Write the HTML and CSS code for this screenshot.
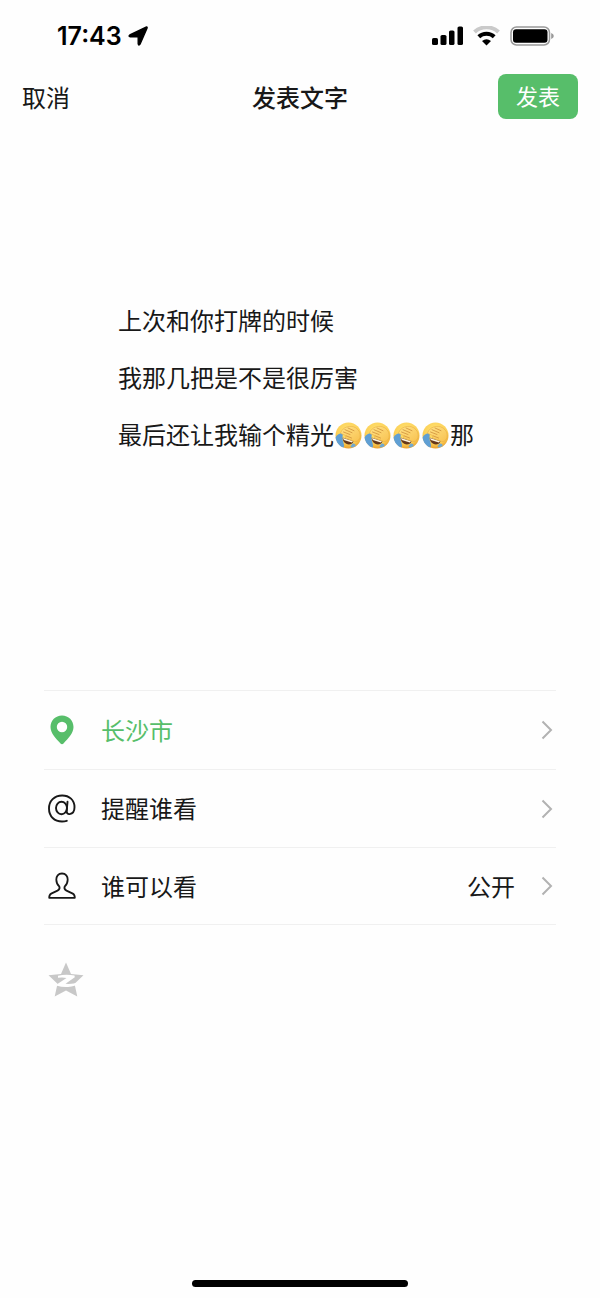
FILE: index.html
```html
<!DOCTYPE html>
<html lang="zh-CN">
<head>
<meta charset="utf-8">
<meta name="viewport" content="width=device-width, initial-scale=1">
<title>发表文字</title>
<link rel="stylesheet" href="styles.css">
</head>
<body>
<svg class="defs" aria-hidden="true">
  <defs>
    <radialGradient id="skin" cx="50%" cy="35%" r="65%">
      <stop offset="0" stop-color="#ffe67a"/>
      <stop offset="0.7" stop-color="#fcd056"/>
      <stop offset="1" stop-color="#e9a02f"/>
    </radialGradient>
    <linearGradient id="hand" x1="0" y1="0" x2="1" y2="1">
      <stop offset="0" stop-color="#ffe388"/>
      <stop offset="1" stop-color="#f8c250"/>
    </linearGradient>
    <symbol id="facepalm" viewBox="0 0 27 27">
      <circle cx="13.5" cy="13.5" r="13" fill="url(#skin)"/>
      <path d="M7.5 15.5 L18.5 19.2 C17.5 22.3 14 23.3 11.2 21.8 C9 20.6 7.5 18.500 7.500 15.500Z" fill="#65371b"/>
      <path d="M8 16 L18 19.3 L16.8 20.4 L8.8 17.9Z" fill="#fff4dc"/>
      <path d="M7.5 11 C4 11.300 1.500 13 0.600 15.500 C1 20 4.500 24.500 8.500 25.500 C10 23.500 8 20 7.500 17 C7.200 14.500 8.300 13 7.500 11Z" fill="#5f9fd4"/>
      <path d="M17.5 21.500 C19.500 21.200 20.800 22.300 20.500 24 C18.500 25.500 16 26 15.500 24.500Z" fill="#6fa8d2"/>
      <path d="M6 10 C8 5.500 13.500 3.500 18.500 4.800 C23.500 6.500 26 11 25 15.500 C24 19.500 20.500 20.500 17 18.300 L11.500 16.200 C9.500 15.300 10 13.800 12 14.200 L7.500 12.200 C5.800 11.600 5.300 11 6 10Z" fill="url(#hand)" stroke="#e3a33b" stroke-width="0.5"/>
      <path d="M8.500 10 L15 12.500 M10 7.700 L17 10.700 M13 6 L19 8.700 M12 14.200 L16.500 16" fill="none" stroke="#c98534" stroke-width="0.7" stroke-linecap="round"/>
    </symbol>
    <symbol id="chevron" viewBox="0 0 12 20">
      <path d="M1.5 1.5 L10 10 L1.5 18.5" fill="none" stroke="#b2b2b2" stroke-width="2"/>
    </symbol>
  </defs>
</svg>

<div class="status">
  <div class="status-side">
    <span class="clock">17:43</span>
    <svg class="locating" viewBox="0 0 20 20" aria-hidden="true"><path d="M18.6 1 Q19.4 1 19 2.200 L12 18.200 Q10.800 20 10.200 17.800 V10.800 H2.400 Q0 10.200 1.800 9Z" stroke="#000" stroke-width="1.4" stroke-linejoin="round"/></svg>
  </div>
  <div class="status-side">
    <svg class="signal" viewBox="0 0 31 20" aria-hidden="true">
      <rect x="0" y="12" width="6" height="7" rx="1.6"/><rect x="8.5" y="9" width="6" height="10" rx="1.6"/><rect x="17" y="4.5" width="5.5" height="14.5" rx="1.6"/><rect x="25.5" y="0.5" width="5.5" height="18.5" rx="1.6"/>
    </svg>
    <svg class="wifi" viewBox="0 0 27 20" aria-hidden="true">
      <path d="M1.5 6 C8 -0.2 19 -0.2 25.5 6" fill="none" stroke="#cacaca" stroke-width="4"/>
      <path d="M5.8 10.8 C10 6.8 17 6.8 21.2 10.8" fill="none" stroke="#000" stroke-width="4"/>
      <path d="M13.5 19.5 L9 15 Q13.5 11.4 18 15Z"/>
    </svg>
    <svg class="battery" viewBox="0 0 44 20" aria-hidden="true">
      <rect x="1" y="1" width="38.5" height="18" rx="5.5" fill="none" stroke="#999" stroke-width="1.5"/>
      <rect x="3" y="3.3" width="34.5" height="13.4" rx="3"/>
      <path d="M41.2 7 Q43.8 8 43.8 10 Q43.8 12 41.2 13Z" fill="#999"/>
    </svg>
  </div>
</div>

<header class="nav">
  <button class="cancel" type="button">取消</button>
  <h1 class="title">发表文字</h1>
  <button class="publish" type="button">发表</button>
</header>

<main class="content">
  <div class="editor" role="textbox" aria-multiline="true" aria-label="正文" contenteditable="true" spellcheck="false"><p class="line">上次和你打牌的时候</p><p class="line">我那几把是不是很厉害</p><p class="line">最后还让我输个精光<svg class="emoji"><use href="#facepalm"/></svg><svg class="emoji"><use href="#facepalm"/></svg><svg class="emoji"><use href="#facepalm"/></svg><svg class="emoji"><use href="#facepalm"/></svg>那</p></div>

  <div class="options">
    <button class="row located" type="button">
      <svg class="row-icon" viewBox="0 0 30 30" aria-hidden="true"><path fill-rule="evenodd" d="M15 0.5 C21.5 0.5 26.5 5.5 26.5 12 C26.5 18.5 21 23.5 16.5 28.5 Q15 30 13.5 28.5 C9 23.5 3.5 18.5 3.5 12 C3.5 5.5 8.5 0.5 15 0.5Z M15 6.8 A5.2 5.2 0 1 0 15 17.2 A5.2 5.2 0 1 0 15 6.8Z" fill="#57be6a"/></svg>
      <span class="label">长沙市</span>
      <svg class="chevron" aria-hidden="true"><use href="#chevron"/></svg>
    </button>
    <button class="row" type="button">
      <svg class="row-icon" viewBox="0 0 30 30" aria-hidden="true"><g fill="none" stroke="#181818" stroke-width="1.9" stroke-linecap="round"><ellipse cx="14.5" cy="14" rx="5.5" ry="6.2"/><path d="M20.5 7.8 L19.7 16.5 C19.5 19.3 20.8 20.3 22.6 20.1 C25.7 19.6 27.5 16.8 27.5 13.2 C27.5 6 22.3 1.5 15.2 1.5 C7.3 1.5 2 7 2 14.5 C2 22.5 7.5 27.5 15 27.5 Q17.6 27.5 19.8 26.8"/></g></svg>
      <span class="label">提醒谁看</span>
      <svg class="chevron" aria-hidden="true"><use href="#chevron"/></svg>
    </button>
    <button class="row" type="button">
      <svg class="row-icon" viewBox="0 0 30 30" aria-hidden="true"><path d="M15 2.5 C11.2 2.5 9.2 5.2 9.3 8.8 C9.4 12 10.8 14.2 12.4 15.7 C13 17.5 12.4 18.6 10.5 19.6 L4.2 22.6 C2.6 23.4 2.2 24.3 2.2 26.8 H27.8 C27.8 24.3 27.4 23.4 25.8 22.6 L19.5 19.6 C17.6 18.6 17 17.5 17.6 15.7 C19.2 14.2 20.6 12 20.7 8.8 C20.8 5.2 18.8 2.5 15 2.5Z" fill="none" stroke="#181818" stroke-width="1.8" stroke-linejoin="round"/></svg>
      <span class="label">谁可以看</span>
      <span class="value">公开</span>
      <svg class="chevron" aria-hidden="true"><use href="#chevron"/></svg>
    </button>
  </div>

  <button class="qzone" type="button" aria-label="同步到QQ空间">
    <svg class="star" viewBox="0 0 36 36" aria-hidden="true">
      <path d="M18 0.5 L23 12 L35.5 13.3 L26.5 21.8 L29.3 34.5 L18 28.500 L6.7 34.5 L9.5 21.8 L0.5 13.3 L13 12Z" fill="#c8c8c8"/>
      <path d="M10 13.8 Q18 12 26.5 13.6 L26.8 15.2 L17.500 21.800 Q24 22.500 31 20.200 Q27.500 24.600 20 25 Q14 25.300 9 23.800 L8.700 22.400 L18.500 15.900 Q14.500 15.200 10 15.800Z" fill="#fff"/>
    </svg>
  </button>
</main>

<div class="home-bar"></div>
</body>
</html>
```
FILE: styles.css
```css
* {
  box-sizing: border-box;
}

body {
  margin: 0;
  min-height: 100vh;
  display: flex;
  flex-direction: column;
  background: #fefefe;
  color: #181818;
  font-family: "Noto Sans CJK SC", sans-serif;
  font-size: 24px;
}

button {
  margin: 0;
  padding: 0;
  border: 0;
  background: none;
  color: inherit;
  font: inherit;
  cursor: pointer;
}

.defs {
  position: absolute;
  width: 0;
  height: 0;
}

.status {
  display: flex;
  justify-content: space-between;
  align-items: center;
  height: 71px;
  padding: 0 46px 0 57px;
}

.status-side {
  display: flex;
  align-items: center;
  gap: 10px;
}

.clock {
  color: #000;
  font: 600 25px/32px Inter, sans-serif;
}

.locating {
  width: 20px;
  height: 20px;
  margin-left: -4px;
}

.signal {
  width: 31px;
  height: 20px;
}

.wifi {
  width: 27px;
  height: 20px;
}

.battery {
  width: 44px;
  height: 20px;
}

.nav {
  display: grid;
  grid-template-columns: 1fr auto 1fr;
  align-items: center;
  height: 50px;
  padding: 0 22px;
}

.cancel {
  justify-self: start;
}

.title {
  margin: 0;
  font-size: 24px;
  font-weight: 500;
}

.publish {
  justify-self: end;
  width: 80px;
  height: 45px;
  padding-bottom: 2px;
  border-radius: 8px;
  background: #57be6a;
  color: #fff;
  font-size: 22px;
}

.content {
  flex: 1;
  padding: 0 44px;
}

.editor {
  min-height: 569px;
  padding: 170px 0 0 74px;
  outline: none;
}

.line {
  margin: 0;
  line-height: 57px;
}

.emoji {
  width: 27px;
  height: 27px;
  margin: 0 1px;
  vertical-align: -5px;
}

.options {
  border-top: 1px solid #f0f0f0;
}

.row {
  display: flex;
  align-items: center;
  width: 100%;
  min-height: 78px;
  padding: 0 3px;
  text-align: left;
}

.row + .row {
  border-top: 1px solid #f0f0f0;
}

.row:last-child {
  border-bottom: 1px solid #f0f0f0;
}

.row-icon {
  width: 30px;
  height: 30px;
  margin-right: 24px;
}

.label,
.value {
  padding-bottom: 2px;
}

.label {
  flex: 1;
}

.located .label {
  color: #57be6a;
}

.value {
  margin-right: 26px;
}

.chevron {
  width: 12px;
  height: 20px;
}

.qzone {
  display: block;
  margin: 37px 0 0 4px;
}

.star {
  display: block;
  width: 36px;
  height: 36px;
}

.home-bar {
  align-self: center;
  width: 36%;
  height: 7px;
  margin-bottom: 11px;
  border-radius: 4px;
  background: #000;
}
```
